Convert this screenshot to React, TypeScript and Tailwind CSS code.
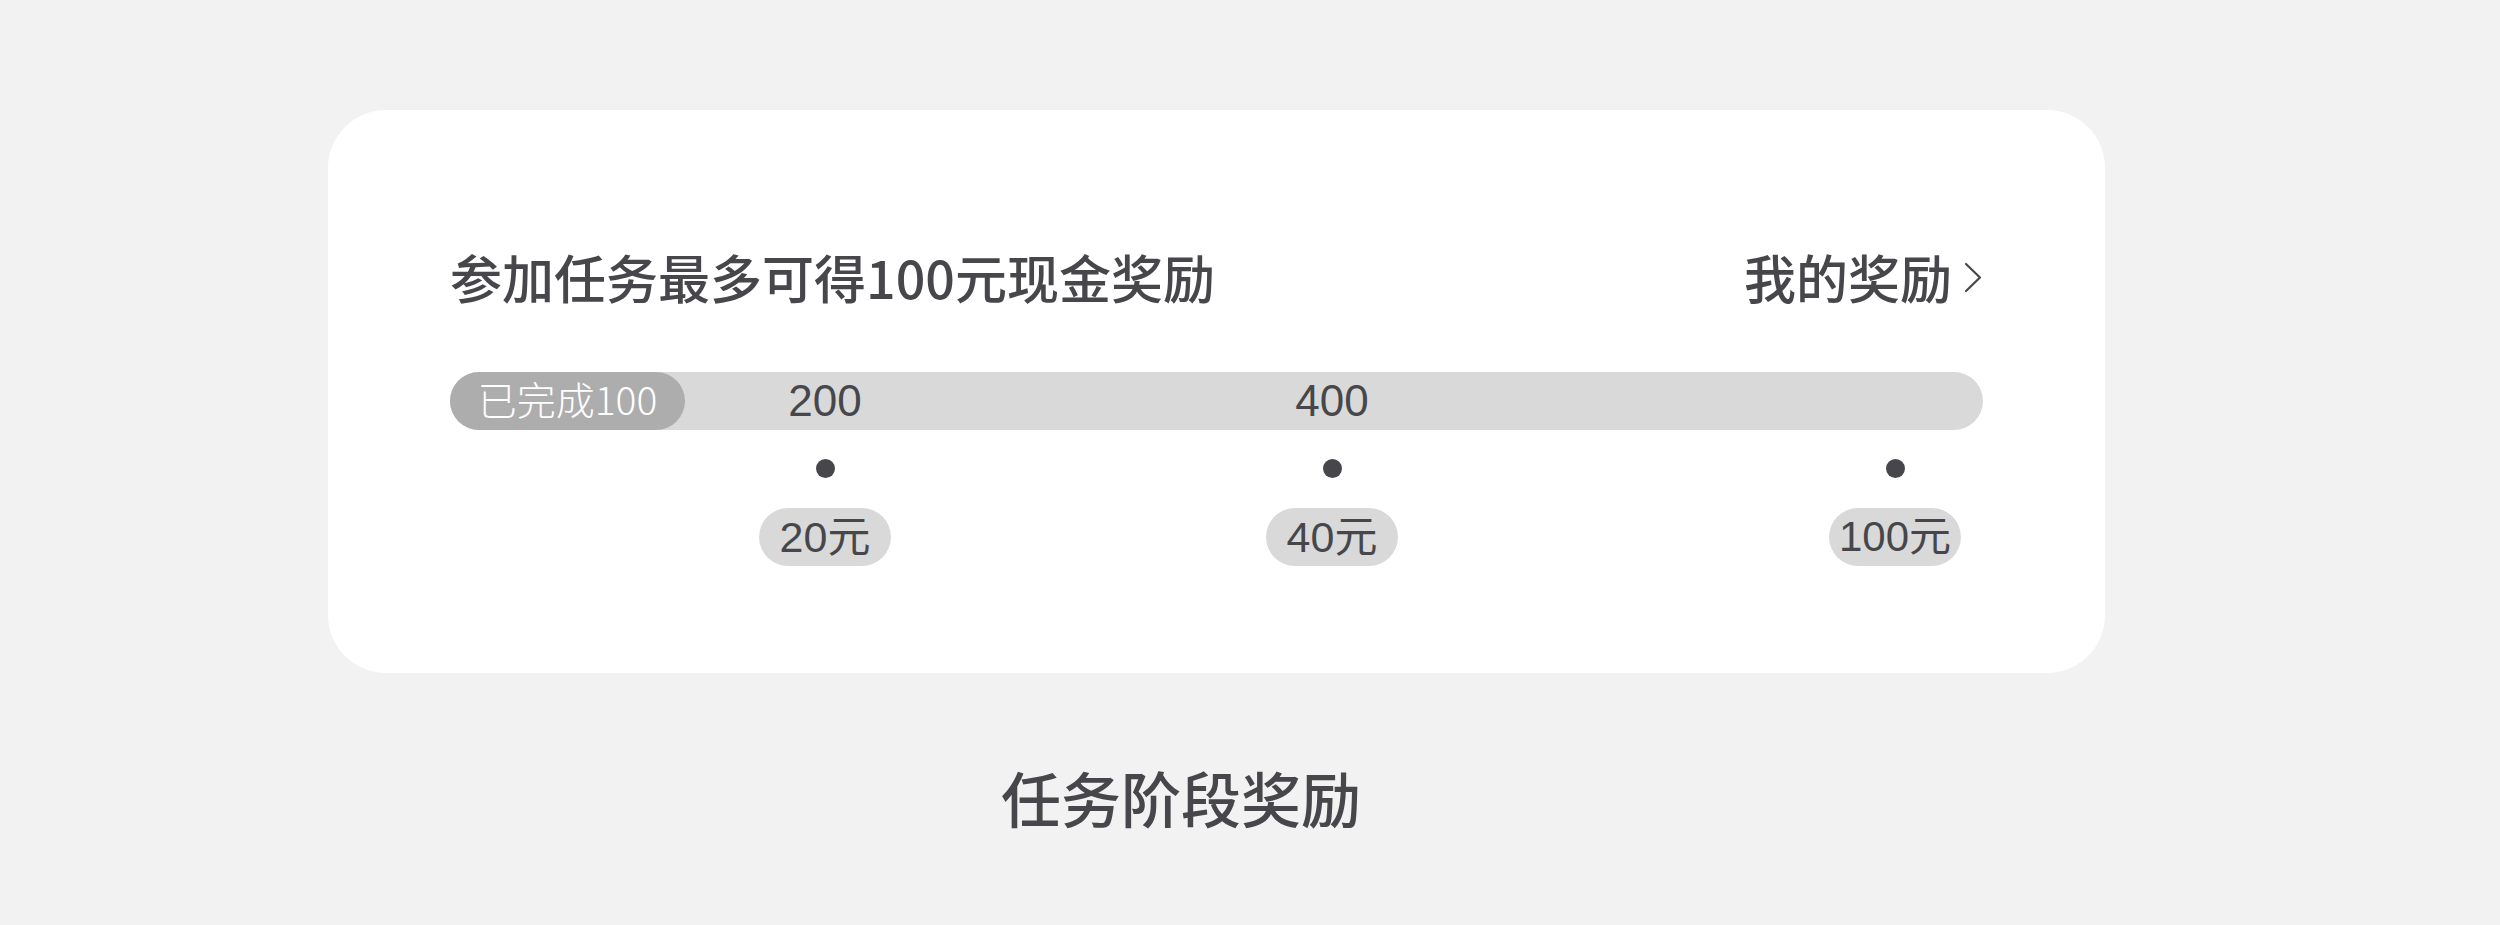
import React from "react";

const FONT = { fontFamily: '"Liberation Sans", "Noto Sans CJK SC", sans-serif' };
const CJK = { fontFamily: '"Noto Sans CJK SC", "Liberation Sans", sans-serif' };

export default function App() {
  return (
    <div
      className="w-[2500px] h-[925px] bg-[#f2f2f2] text-[#47474b] overflow-hidden"
      style={FONT}
    >
      <div className="pt-[110px] pl-[328px]">
        {/* Card */}
        <div className="w-[1777px] h-[563px] rounded-[58px] bg-white px-[122px] pt-[137px]">
          {/* Title row */}
          <div className="flex items-center justify-between h-[60px] leading-[60px]" style={CJK}>
            <div className="text-[52px] font-medium">参加任务最多可得100元现金奖励</div>
            <div className="flex items-center">
              <span className="text-[52px] font-medium">我的奖励</span>
              <svg
                className="ml-[12px]"
                width="19"
                height="31"
                viewBox="0 0 19 31"
                fill="none"
              >
                <polyline
                  points="2,2 16,15.5 2,29"
                  stroke="#47474b"
                  strokeWidth="2.2"
                  strokeLinecap="round"
                  strokeLinejoin="round"
                />
              </svg>
            </div>
          </div>

          {/* Progress bar */}
          <div className="mt-[65px] h-[58px] rounded-full bg-[#d9d9d9] grid grid-cols-[309px_132px_375px_132px_431px_132px] items-center">
            <div
              className="col-start-1 col-span-2 row-start-1 w-[235px] h-[58px] pb-[5px] rounded-full bg-[#adadad] flex items-center justify-center text-white text-[39px] font-extralight leading-none"
              style={CJK}
            >
              已完成100
            </div>
            <div className="col-start-2 row-start-1 text-center text-[44px] leading-none">200</div>
            <div className="col-start-4 row-start-1 text-center text-[44px] leading-none">400</div>
          </div>

          {/* Dots */}
          <div className="mt-[29px] grid grid-cols-[309px_132px_375px_132px_431px_132px] h-[19px]">
            <div className="col-start-2 flex justify-center">
              <div className="w-[19px] h-[19px] rounded-full bg-[#47474b]" />
            </div>
            <div className="col-start-4 flex justify-center">
              <div className="w-[19px] h-[19px] rounded-full bg-[#47474b]" />
            </div>
            <div className="col-start-6 flex justify-center">
              <div className="w-[19px] h-[19px] rounded-full bg-[#47474b]" />
            </div>
          </div>

          {/* Reward pills */}
          <div className="mt-[30px] grid grid-cols-[309px_132px_375px_132px_431px_132px]">
            <div className="col-start-2 h-[58px] rounded-full bg-[#d9d9d9] flex items-center justify-center text-[43px] leading-none">
              20元
            </div>
            <div className="col-start-4 h-[58px] rounded-full bg-[#d9d9d9] flex items-center justify-center text-[43px] leading-none">
              40元
            </div>
            <div className="col-start-6 h-[58px] rounded-full bg-[#d9d9d9] flex items-center justify-center text-[42px] leading-none">
              100元
            </div>
          </div>
        </div>

        {/* Caption */}
        <div className="mt-[94px] ml-[673px] text-[60px] leading-[60px] font-medium" style={CJK}>
          任务阶段奖励
        </div>
      </div>
    </div>
  );
}
